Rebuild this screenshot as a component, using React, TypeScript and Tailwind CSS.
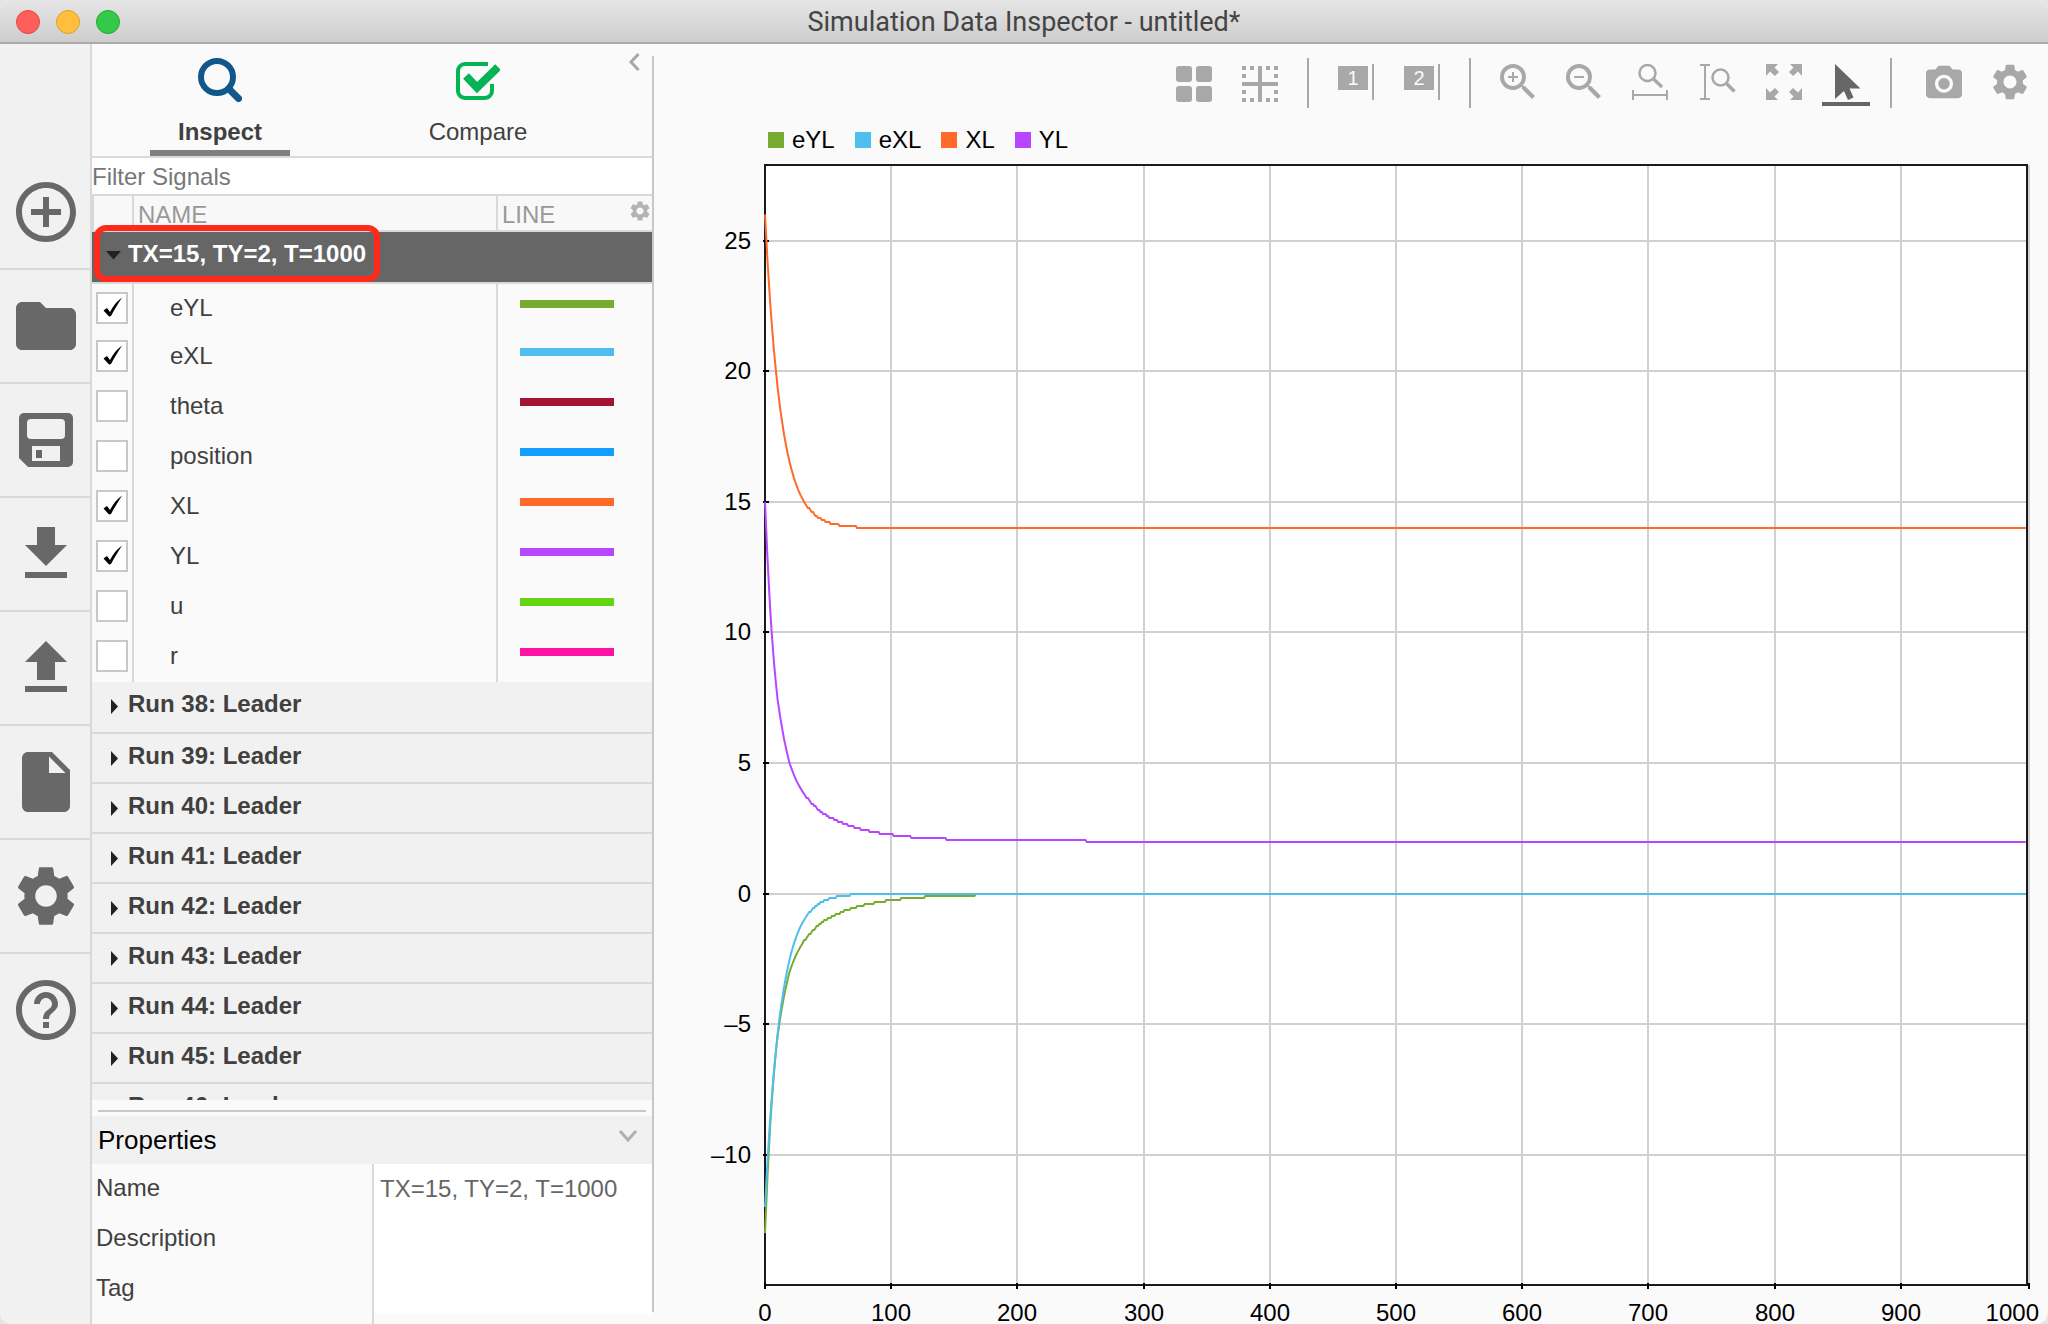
import React, { useState } from "react";
import {
  MdAddCircleOutline,
  MdCameraAlt,
  MdFolder,
  MdHelpOutline,
  MdInsertDriveFile,
  MdSettings,
  MdZoomIn,
  MdZoomOut,
} from "react-icons/md";

type Signal = {
  name: string;
  color: string;
  checked: boolean;
};

const initialSignals: Signal[] = [
  { name: "eYL", color: "#77ac30", checked: true },
  { name: "eXL", color: "#4dbeee", checked: true },
  { name: "theta", color: "#a2142f", checked: false },
  { name: "position", color: "#139fff", checked: false },
  { name: "XL", color: "#ff6929", checked: true },
  { name: "YL", color: "#b746ff", checked: true },
  { name: "u", color: "#64d413", checked: false },
  { name: "r", color: "#ff13a6", checked: false },
];

const runs = [38, 39, 40, 41, 42, 43, 44, 45, 46];

const properties = [
  { label: "Name", value: "TX=15, TY=2, T=1000" },
  { label: "Description", value: "" },
  { label: "Tag", value: "" },
];

/* ---------- icons ---------- */

function SaveIcon() {
  return (
    <svg width={72} height={72} viewBox="0 0 72 72" fill="currentColor">
      <path
        fillRule="evenodd"
        d="M14 9h44a5 5 0 0 1 5 5v44a5 5 0 0 1-5 5H18l-9-9V14a5 5 0 0 1 5-5zM21 15a4 4 0 0 0-4 4v12a4 4 0 0 0 4 4h30a4 4 0 0 0 4-4V19a4 4 0 0 0-4-4zM22 42v15h28V42zM26 46h6v8h-6z"
      />
    </svg>
  );
}

function DownloadIcon() {
  return (
    <svg width={72} height={72} viewBox="0 0 24 24" fill="currentColor">
      <path d="M19 9h-4V3H9v6H5l7 7 7-7zM5 18v2h14v-2H5z" />
    </svg>
  );
}

function UploadIcon() {
  return (
    <svg width={72} height={72} viewBox="0 0 24 24" fill="currentColor">
      <path d="M9 16h6v-6h4l-7-7-7 7h4zm-4 2h14v2H5z" />
    </svg>
  );
}

function InspectIcon() {
  return (
    <svg width={44} height={44} viewBox="0 0 44 44" fill="none" stroke="#12578b">
      <circle cx={19} cy={19} r={16} strokeWidth={6} />
      <path d="M31 31l9.500 9.500" strokeWidth={7} strokeLinecap="round" />
    </svg>
  );
}

function CompareIcon() {
  return (
    <svg width={44} height={44} viewBox="0 -4 44 44" fill="none" stroke="#04b352">
      <path
        d="M32 2H9a7 7 0 0 0-7 7v20a7 7 0 0 0 7 7h20a7 7 0 0 0 7-7v-7"
        strokeWidth={4}
      />
      <path d="M10 14l11 11.500L42 5" strokeWidth={8} />
    </svg>
  );
}

function LayoutIcon() {
  return (
    <svg width={36} height={38} viewBox="0 0 36 38" fill="currentColor">
      <rect x={0} y={2} width={16} height={16} rx={3} />
      <rect x={20} y={2} width={16} height={16} rx={3} />
      <rect x={0} y={22} width={16} height={16} rx={3} />
      <rect x={20} y={22} width={16} height={16} rx={3} />
    </svg>
  );
}

function GridIcon() {
  const edge = [0, 8, 24, 32];
  return (
    <svg width={36} height={38} viewBox="0 0 36 38" fill="currentColor">
      <rect x={16} y={2} width={4} height={36} />
      <rect x={0} y={18} width={36} height={4} />
      {edge.map((p) => (
        <React.Fragment key={p}>
          <rect x={p} y={2} width={4} height={4} />
          <rect x={p} y={34} width={4} height={4} />
          <rect x={0} y={p + 2} width={4} height={4} />
          <rect x={32} y={p + 2} width={4} height={4} />
        </React.Fragment>
      ))}
    </svg>
  );
}

function CursorIcon({ label }: { label: string }) {
  return (
    <span className="flex items-start gap-1">
      <span className="mt-[2px] flex h-6 w-[30px] items-center justify-center bg-[#a8a8a8] text-xl leading-6 text-[#fafafa]">
        {label}
      </span>
      <span className="h-9 w-[2px] bg-[#a8a8a8]" />
    </span>
  );
}

function ZoomTimeIcon() {
  return (
    <svg width={36} height={36} viewBox="2 0 36 36" fill="none" stroke="currentColor">
      <circle cx={17.5} cy={9} r={8} strokeWidth={2.500} />
      <path d="M23.500 15l8.500 8" strokeWidth={3.500} />
      <path d="M3 26v10M37 26v10M3 31h34" strokeWidth={2} />
    </svg>
  );
}

function ZoomYIcon() {
  return (
    <svg width={38} height={36} viewBox="0 0 38 36" fill="none" stroke="currentColor">
      <circle cx={22.5} cy={13.5} r={8} strokeWidth={2.500} />
      <path d="M28.500 19.500l8 8" strokeWidth={3.500} />
      <path d="M2 1h10M2 35h10M7 1v34" strokeWidth={2} />
    </svg>
  );
}

function FitIcon() {
  const arrow = "M0 0h12l-3.500 3.500 4.500 4.500-4 4-5-4.500L0 12z";
  return (
    <svg width={36} height={36} viewBox="0 0 36 36" fill="currentColor">
      <path d={arrow} />
      <path d={arrow} transform="translate(36 0) scale(-1 1)" />
      <path d={arrow} transform="translate(0 36) scale(1 -1)" />
      <path d={arrow} transform="translate(36 36) scale(-1 -1)" />
    </svg>
  );
}

function PointerIcon() {
  return (
    <svg width={48} height={36} viewBox="0 0 48 36" fill="currentColor">
      <path d="M13 0v35l9-8 4 9 5.500-2.500-4-9h11z" />
    </svg>
  );
}

function Caret({ open }: { open?: boolean }) {
  return (
    <svg width={16} height={16} viewBox="0 0 16 16" fill="#222">
      {open ? <path d="M0 5h15l-7.500 8.500z" /> : <path d="M5 1l7 7.500-7 7.500z" />}
    </svg>
  );
}

/* ---------- left rail ---------- */

const railItems = [
  { label: "New", icon: <MdAddCircleOutline size={72} /> },
  { label: "Open", icon: <MdFolder size={72} /> },
  { label: "Save", icon: <SaveIcon /> },
  { label: "Import", icon: <DownloadIcon /> },
  { label: "Export", icon: <UploadIcon /> },
  { label: "Report", icon: <MdInsertDriveFile size={72} /> },
  { label: "Preferences", icon: <MdSettings size={72} /> },
  { label: "Help", icon: <MdHelpOutline size={72} /> },
];

function Rail() {
  return (
    <nav className="flex w-[92px] shrink-0 flex-col border-r-2 border-[#d9d9d9] bg-[#f1f1f1] pt-28 text-[#686868]">
      {railItems.map((item) => (
        <button
          key={item.label}
          aria-label={item.label}
          className="flex h-[114px] shrink-0 items-center border-b-2 border-[#d9d9d9] pl-[10px] last:border-transparent hover:bg-[#e8e8e8]"
        >
          {item.icon}
        </button>
      ))}
    </nav>
  );
}

/* ---------- sidebar ---------- */

function Tabs() {
  return (
    <div className="flex h-[114px] shrink-0 border-b-2 border-[#d9d9d9] text-2xl leading-8 text-[#404040]">
      <button className="flex w-64 flex-col items-center pt-[14px] font-bold">
        <InspectIcon />
        <span className="mt-[14px]">Inspect</span>
        <span className="mt-[2px] h-[6px] w-[140px] bg-[#808080]" />
      </button>
      <button className="flex w-[260px] flex-col items-center pt-[14px]">
        <CompareIcon />
        <span className="mt-[14px]">Compare</span>
      </button>
      <button aria-label="Collapse panel" className="ml-auto self-start pt-2 pr-3">
        <svg width={12} height={20} viewBox="0 0 12 20" fill="none" stroke="#a8a8a8">
          <path d="M10.500 2L3 10l7.500 8" strokeWidth={3} />
        </svg>
      </button>
    </div>
  );
}

function SignalRow({ signal, onToggle }: { signal: Signal; onToggle: () => void }) {
  const id = `signal-${signal.name}`;
  return (
    <tr className="h-[50px] align-top first:h-12">
      <td className="border-r-2 border-[#d9d9d9] pt-2 pl-1">
        <div className="relative h-8 w-8">
          <input
            id={id}
            type="checkbox"
            checked={signal.checked}
            onChange={onToggle}
            className="peer block h-8 w-8 appearance-none border-2 border-[#c8c8c8] bg-white"
          />
          <svg
            viewBox="0 0 32 32"
            className="pointer-events-none absolute inset-0 hidden fill-black peer-checked:block"
          >
            <path d="M7.500 18.500l3.500-2.500 3 4C17 14 21 9 26 5.500 22 12 18 18 15 24l-2 .5z" />
          </svg>
        </div>
      </td>
      <td className="border-r-2 border-[#d9d9d9] pt-2 pl-9">
        <label htmlFor={id} className="block">
          {signal.name}
        </label>
      </td>
      <td className="pt-4 pl-[22px]">
        <div className="h-2 w-[94px]" style={{ backgroundColor: signal.color }} />
      </td>
    </tr>
  );
}

function SignalTable({
  signals,
  onToggle,
}: {
  signals: Signal[];
  onToggle: (name: string) => void;
}) {
  return (
    <div className="min-h-0 flex-1 overflow-hidden">
      <table className="w-full table-fixed border-separate border-spacing-0 text-left text-2xl leading-8 text-[#404040]">
        <colgroup>
          <col className="w-[42px]" />
          <col className="w-[364px]" />
          <col />
        </colgroup>
        <thead className="bg-[#f8f8f8] text-[#999]">
          <tr className="h-9">
            <th className="border-x-2 border-b-2 border-[#d9d9d9]" />
            <th className="border-r-2 border-b-2 border-[#d9d9d9] pl-1 font-normal">
              <div className="h-8 pt-[2px]">NAME</div>
            </th>
            <th className="border-b-2 border-[#d9d9d9] pl-1 font-normal">
              <div className="flex h-8 justify-between pt-[2px] pr-[2px]">
                LINE
                <button aria-label="Configure columns" className="self-start pt-[2px] text-[#b3b3b3]">
                  <MdSettings viewBox="2 2 20 20" size={20} />
                </button>
              </div>
            </th>
          </tr>
        </thead>
        <tbody>
          <tr className="h-[52px] align-top">
            <td colSpan={3} className="border-b-2 border-[#d9d9d9] bg-[#666] font-bold text-white">
              <button className="relative flex items-center gap-[6px] pt-[6px] pl-[14px]">
                <Caret open />
                TX=15, TY=2, T=1000
                {/* highlight around the selected run */}
                <span className="pointer-events-none absolute -top-[7px] left-[2px] h-[57px] w-[286px] rounded-xl border-6 border-[#ff2a1c]" />
              </button>
            </td>
          </tr>
        </tbody>
        <tbody>
          {signals.map((signal) => (
            <SignalRow
              key={signal.name}
              signal={signal}
              onToggle={() => onToggle(signal.name)}
            />
          ))}
        </tbody>
        <tbody>
          {runs.map((run) => (
            <tr key={run} className="h-[50px] align-top first:h-[52px]">
              <td colSpan={3} className="border-b-2 border-[#d9d9d9] bg-[#f1f1f1] font-bold">
                <button className="flex items-center gap-[6px] pt-[6px] pl-[14px]">
                  <span className="pt-1">
                    <Caret />
                  </span>
                  Run {run}: Leader
                </button>
              </td>
            </tr>
          ))}
        </tbody>
      </table>
    </div>
  );
}

function Properties() {
  return (
    <section className="shrink-0">
      <div className="mx-[6px] mt-[10px] mb-1 h-[2px] bg-[#c8c8c8]" />
      <div className="flex h-12 items-center justify-between bg-[#f1f1f1] pr-[14px] pl-[6px]">
        <h2 className="text-[26px] leading-8 text-black">Properties</h2>
        <button aria-label="Collapse properties" className="pb-2">
          <svg width={20} height={12} viewBox="0 0 20 12" fill="none" stroke="#b0b0b0">
            <path d="M2 1l8 9 8-9" strokeWidth={3} />
          </svg>
        </button>
      </div>
      <div className="flex text-2xl leading-8">
        <div className="w-[282px] shrink-0 border-r-2 border-[#d9d9d9] pb-[10px] text-[#404040]">
          {properties.map((p) => (
            <label key={p.label} htmlFor={`prop-${p.label}`} className="block h-[50px] pt-2 pl-1">
              {p.label}
            </label>
          ))}
        </div>
        <div className="min-w-0 flex-1 self-start bg-white text-[#666]">
          {properties.map((p) => (
            <input
              key={p.label}
              id={`prop-${p.label}`}
              defaultValue={p.value}
              className="block h-[50px] w-full px-[6px] outline-none"
            />
          ))}
        </div>
      </div>
    </section>
  );
}

/* ---------- toolbar ---------- */

function ToolButton({ label, children }: { label: string; children: React.ReactNode }) {
  return (
    <button aria-label={label} className="flex items-start pt-[6px]">
      {children}
    </button>
  );
}

function Toolbar() {
  return (
    <div className="flex h-20 shrink-0 justify-end pt-[14px] pr-5 pb-4 text-[#a8a8a8]">
      <div className="flex gap-[30px]">
        <ToolButton label="Layout">
          <LayoutIcon />
        </ToolButton>
        <ToolButton label="Subplots">
          <GridIcon />
        </ToolButton>
      </div>
      <div className="mx-[29px] w-[2px] bg-[#a8a8a8]" />
      <div className="flex gap-[30px]">
        <ToolButton label="One cursor">
          <CursorIcon label="1" />
        </ToolButton>
        <ToolButton label="Two cursors">
          <CursorIcon label="2" />
        </ToolButton>
      </div>
      <div className="mx-[29px] w-[2px] bg-[#a8a8a8]" />
      <div className="flex gap-[30px]">
        <ToolButton label="Zoom in">
          <MdZoomIn viewBox="3 3 18 18" size={36} />
        </ToolButton>
        <ToolButton label="Zoom out">
          <MdZoomOut viewBox="3 3 18 18" size={36} />
        </ToolButton>
        <ToolButton label="Zoom in time">
          <ZoomTimeIcon />
        </ToolButton>
        <ToolButton label="Zoom in Y">
          <ZoomYIcon />
        </ToolButton>
        <ToolButton label="Fit to view">
          <FitIcon />
        </ToolButton>
      </div>
      <button aria-label="Select" className="ml-5 flex flex-col gap-[2px] pt-[6px] text-[#666]">
        <PointerIcon />
        <span className="h-1 w-12 bg-[#666]" />
      </button>
      <div className="mr-[34px] ml-5 w-[2px] bg-[#a8a8a8]" />
      <div className="flex gap-[30px]">
        <ToolButton label="Snapshot">
          <MdCameraAlt viewBox="2 1 20 20" size={36} />
        </ToolButton>
        <ToolButton label="Settings">
          <MdSettings viewBox="2 2 20 20" size={36} />
        </ToolButton>
      </div>
    </div>
  );
}

/* ---------- plot ---------- */

const PLOT = { left: 111, right: 1373, top: 9, bottom: 1129 };
const ZERO_Y = 737.6;
const X_UNIT = 1.262;
const Y_UNIT = 26.12;

const xTicks = [0, 100, 200, 300, 400, 500, 600, 700, 800, 900, 1000];
const yTicks = [25, 20, 15, 10, 5, 0, -5, -10];

const px = (t: number) => PLOT.left + t * X_UNIT;
const py = (v: number) => ZERO_Y - v * Y_UNIT;

// the last tick stands just outside the frame
const tickX = (t: number) => (t === 1000 ? PLOT.right + 2 : Math.round(px(t)));
const tickY = (v: number) => Math.round(py(v));

const fastDecay = (t: number) => 12 * Math.exp(-0.08 * t);

// samples of the slower error, [time, magnitude]
const slowSamples = [
  [0, 13],
  [5.3, 8],
  [9.7, 5.54],
  [14.8, 4],
  [19.3, 3.02],
  [24.5, 2.36],
  [30.9, 1.82],
  [44.8, 1.11],
  [63.8, 0.65],
  [88.4, 0.34],
  [120, 0.15],
  [180, 0.04],
  [230, 0.015],
  [1000, 0.001],
];

function slowDecay(t: number) {
  const i = Math.max(1, slowSamples.findIndex(([x]) => x >= t));
  const [t0, v0] = slowSamples[i - 1];
  const [t1, v1] = slowSamples[i];
  const k = (t - t0) / (t1 - t0);
  return v0 * Math.pow(v1 / v0, k);
}

const curves: Record<string, (t: number) => number> = {
  eYL: (t) => -slowDecay(t),
  eXL: (t) => -fastDecay(t),
  XL: (t) => 14 + fastDecay(t),
  YL: (t) => 2 + slowDecay(t),
};

function buildPath(fn: (t: number) => number) {
  const points: string[] = [];
  for (let t = 0; t <= 999; t += 1) {
    const y = py(fn(t));
    // the flat part of each curve moves in two pixel steps
    points.push(`${px(t).toFixed(1)},${t > 30 ? Math.round(y / 2) * 2 : y.toFixed(1)}`);
  }
  return `M${points.join("L")}`;
}

function Plot({ signals }: { signals: Signal[] }) {
  return (
    <svg
      viewBox="0 0 1394 1168"
      className="min-h-0 w-full flex-1 text-2xl"
      role="img"
      aria-label="Signal plot"
    >
      <rect
        x={PLOT.left}
        y={PLOT.top}
        width={PLOT.right - PLOT.left}
        height={PLOT.bottom - PLOT.top}
        fill="#fff"
      />
      <g stroke="#d0d0d0" strokeWidth={2} shapeRendering="crispEdges">
        {xTicks.map((t) => (
          <path key={t} d={`M${tickX(t)} ${PLOT.top}V${PLOT.bottom}`} />
        ))}
        {yTicks.map((v) => (
          <path key={v} d={`M${PLOT.left} ${tickY(v)}H${PLOT.right}`} />
        ))}
      </g>
      <g stroke="#1a1a1a" strokeWidth={2} fill="none" shapeRendering="crispEdges">
        <rect
          x={PLOT.left}
          y={PLOT.top}
          width={PLOT.right - PLOT.left}
          height={PLOT.bottom - PLOT.top}
        />
        {xTicks.map((t) => (
          <path key={t} stroke="#000" d={`M${tickX(t)} ${PLOT.bottom - 2}v6`} />
        ))}
        {yTicks.map((v) => (
          <path key={v} stroke="#000" d={`M${PLOT.left - 2} ${tickY(v)}h6`} />
        ))}
      </g>
      <g fill="#000">
        {yTicks.map((v) => (
          <text key={v} x={97} y={tickY(v) + 8} textAnchor="end">
            {v < 0 ? `–${-v}` : v}
          </text>
        ))}
        {xTicks.map((t) => (
          <text
            key={t}
            x={t === 1000 ? 1385 : tickX(t)}
            y={1165}
            textAnchor={t === 1000 ? "end" : "middle"}
          >
            {t}
          </text>
        ))}
      </g>
      {signals.map((s) => (
        <path key={s.name} d={buildPath(curves[s.name])} fill="none" stroke={s.color} strokeWidth={2} />
      ))}
    </svg>
  );
}

function Legend({ signals }: { signals: Signal[] }) {
  return (
    <ul className="flex h-8 shrink-0 gap-5 pl-[114px] text-2xl leading-8 text-black">
      {signals.map((s) => (
        <li key={s.name} className="flex items-center gap-2">
          <span className="h-4 w-4" style={{ backgroundColor: s.color }} />
          {s.name}
        </li>
      ))}
    </ul>
  );
}

export default function App() {
  const [signals, setSignals] = useState(initialSignals);

  function toggle(name: string) {
    setSignals(signals.map((s) => (s.name === name ? { ...s, checked: !s.checked } : s)));
  }

  const plotted = signals.filter((s) => s.checked && curves[s.name]);

  return (
    <div className="h-screen bg-[#e4e4e4] font-['Liberation_Sans',Arial,sans-serif]">
      <div className="flex h-full flex-col overflow-hidden rounded-xl bg-[#fafafa]">
        <header className="relative flex h-11 shrink-0 items-center justify-center border-b-2 border-[#aaa] bg-linear-to-b from-[#e6e6e6] to-[#cdcdcd] pt-[2px]">
          <div className="absolute top-[10px] left-4 flex gap-4">
            <button aria-label="Close" className="h-6 w-6 rounded-full border border-[#e2463f] bg-[#ff5f5a]" />
            <button aria-label="Minimize" className="h-6 w-6 rounded-full border border-[#dfa023] bg-[#ffbe3f]" />
            <button aria-label="Zoom" className="h-6 w-6 rounded-full border border-[#1faa2e] bg-[#34ca49]" />
          </div>
          <h1 className="font-[Roboto,sans-serif] text-[27px] leading-8 text-[#444]">
            Simulation Data Inspector - untitled*
          </h1>
        </header>
        <div className="flex min-h-0 flex-1">
          <Rail />
          <aside className="flex w-[560px] shrink-0 flex-col">
            <Tabs />
            <input
              type="search"
              aria-label="Filter signals"
              placeholder="Filter Signals"
              className="h-[38px] shrink-0 border-b-2 border-[#d9d9d9] bg-white pt-[2px] text-2xl outline-none placeholder:text-[#777]"
            />
            <SignalTable signals={signals} onToggle={toggle} />
            <Properties />
          </aside>
          <div className="my-3 w-[2px] shrink-0 bg-[#c8c8c8]" />
          <main className="flex min-w-0 flex-1 flex-col">
            <Toolbar />
            <Legend signals={plotted} />
            <Plot signals={plotted} />
          </main>
        </div>
      </div>
    </div>
  );
}
